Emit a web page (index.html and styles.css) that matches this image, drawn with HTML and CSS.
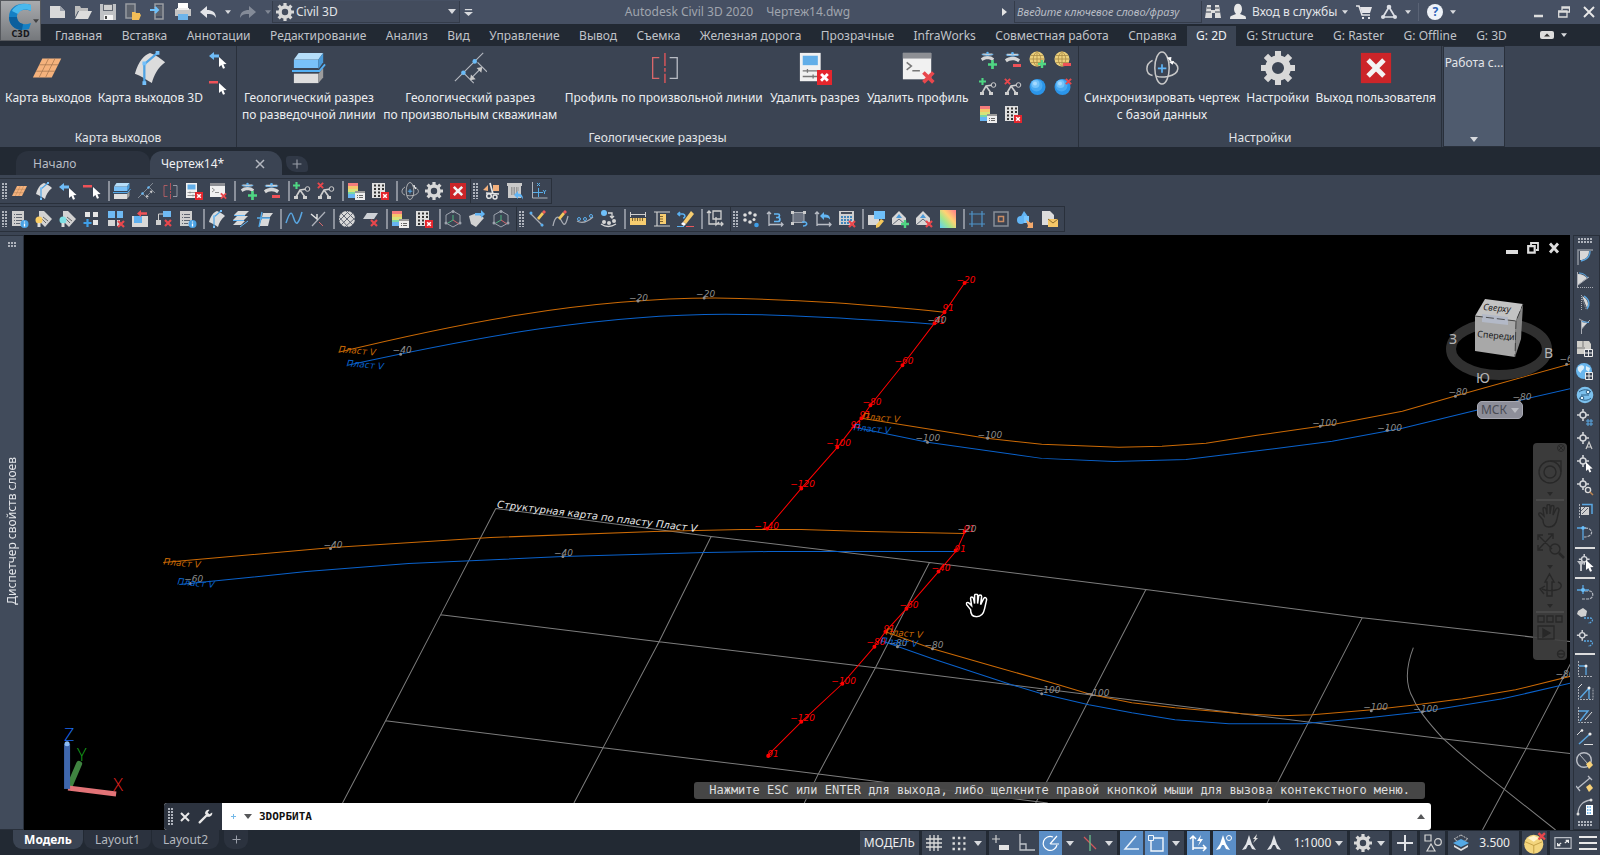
FILE: index.html
```html
<!DOCTYPE html>
<html lang="ru">
<head>
<meta charset="utf-8">
<title>Autodesk Civil 3D 2020 — Чертеж14.dwg</title>
<link rel="stylesheet" href="styles.css">
</head>
<body>
<svg class="defs" aria-hidden="true">
  <!-- badges -->
  <symbol id="bx" viewBox="0 0 8 8"><path fill="#e5262d" d="M0 0h8v8H0z"/><path stroke="#fff" stroke-width="1.5" d="M2.2 2.2l3.6 3.6M5.8 2.2L2.2 5.8"/></symbol>
  <symbol id="rx" viewBox="0 0 8 8"><path stroke="#e8474c" stroke-width="2.2" d="M1 1l6 6M7 1L1 7"/></symbol>
  <symbol id="gp" viewBox="0 0 8 8"><path stroke="#4fd683" stroke-width="2.4" d="M4 0v8M0 4h8"/></symbol>
  <symbol id="cur" viewBox="0 0 8 12"><path fill="#fff" d="M0 0v10l2.4-2 1.6 3.8 2-.9-1.6-3.6L7.600 7z"/></symbol>
  <symbol id="dn" viewBox="0 0 8 5"><path fill="#d8dade" d="M0 0h8L4 5z"/></symbol>
  <!-- application bar -->
  <symbol id="new" viewBox="0 0 18 18"><path fill="#d9d9d9" d="M1 3h10l5 5v7H1z"/><path fill="#9aa0aa" d="M11 3v5h5z"/></symbol>
  <symbol id="open" viewBox="0 0 18 18"><path fill="#bdbdbd" d="M1 3h5l1 2h7v3H4L1 14z"/><path fill="#dcdcdc" d="M5 8h13l-4 8H1z"/></symbol>
  <symbol id="save" viewBox="0 0 18 18"><path fill="#bfc1c4" d="M1 1h16v16H1z"/><path fill="#5f6570" d="M4 1h10v7H4z"/><path fill="#cfcfcf" d="M5 2h8v5H5z"/><path fill="#f4f4f4" d="M5 12h9v5H5z"/><path fill="#444" d="M6 13h2v3H6z"/></symbol>
  <symbol id="webopen" viewBox="0 0 18 18"><path fill="none" stroke="#9a9da3" stroke-width="1.500" d="M2 1h9v14H2z"/><path fill="#5d636d" d="M3 2h7v12H3z"/><path fill="#f2bd57" d="M8 9h3l1 1h4v1l1 1-2 5H8z"/></symbol>
  <symbol id="websave" viewBox="0 0 18 18"><path fill="none" stroke="#9a9da3" stroke-width="1.500" d="M6 1h8v15H6z"/><path fill="#5d636d" d="M7 3h6v10H7z"/><path stroke="#6fc1fb" stroke-width="2" fill="none" d="M1 7h8M6 4l3 3-3 3"/></symbol>
  <symbol id="print" viewBox="0 0 18 18"><path fill="#fff" d="M4 0h10v6H4z"/><path fill="#c4c4c4" d="M1 6h16v7H1z"/><path fill="#6db4ea" d="M4 11h10v6H4z"/><path fill="#eee" d="M3 5h12v2H3z"/></symbol>
  <symbol id="undo" viewBox="0 0 18 18"><path fill="currentColor" d="M1 9l7-6v4c5 0 9 2 9 8-2-4-5-4-9-4v4z"/></symbol>
  <symbol id="gear" viewBox="0 0 18 18"><circle cx="9" cy="9" r="5" fill="none" stroke="#d8d8d8" stroke-width="3.600"/><path stroke="#d8d8d8" stroke-width="3.200" d="M9 0v3M9 15v3M0 9h3M15 9h3M2.600 2.600l2.200 2.200M13.200 13.200l2.200 2.200M2.600 15.400l2.200-2.200M13.200 4.800l2.200-2.200"/></symbol>
  <symbol id="bino" viewBox="0 0 18 18"><path fill="#ddd" d="M3 2h4v5h4V2h4l2 13h-6V10H8v5H1z"/><path stroke="#39404d" d="M3 5h4M11 5h4M2 9h5M11 9h5"/></symbol>
  <symbol id="user" viewBox="0 0 18 18"><path fill="#e8e8e8" d="M5 6c0-7 8-7 8 0 0 2-1 4-2 5l5 2c1 0 1 3 1 3H1s0-3 1-3l5-2c-1-1-2-3-2-5z"/></symbol>
  <symbol id="cart" viewBox="0 0 18 18"><path fill="none" stroke="#e4e4e8" stroke-width="1.600" d="M1 3h3l3 9h8"/><path fill="#e4e4e8" d="M5 4h12l-2 6H7z"/><path fill="#e4e4e8" d="M7 14h2v2H7zM13 14h2v2h-2z"/></symbol>
  <symbol id="tri" viewBox="0 0 18 18"><path fill="none" stroke="#dcdfe6" stroke-width="1.700" d="M9 4L3 14h12z"/><circle cx="9" cy="4" r="2.300" fill="#dcdfe6"/><circle cx="3" cy="14" r="2" fill="#dcdfe6"/><circle cx="15" cy="14" r="2" fill="#dcdfe6"/></symbol>
  <!-- geology commands -->
  <symbol id="sheet" viewBox="0 0 18 18"><path fill="#f5b27c" d="M6 4h10l-5 10H1z"/><path stroke="#a87850" stroke-width=".4" d="M9.300 4l-5 10M12.700 4l-5 10M4.300 7.300h10M2.700 10.700h10"/></symbol>
  <symbol id="surf" viewBox="0 0 18 18"><path fill="#dcdcdc" d="M1 12C3 5 6 2 9 1c3 1 6 3 8 5-4 3-6 7-7 11-3-2-6-4-9-5z"/><path fill="none" stroke="#4fa3e3" stroke-width="1.200" d="M6 17V7l7-6"/><path fill="#74c0fa" d="M5 5.500h2v2H5zM5 16h2v2H5zM12 0h2v2h-2z"/></symbol>
  <symbol id="selarr" viewBox="0 0 18 18"><path fill="#6fbcf7" d="M0 5l5-4v2.500h5v3H5V9z"/><use href="#cur" x="10" y="6" width="8" height="12"/></symbol>
  <symbol id="selmin" viewBox="0 0 18 18"><path fill="#ef5258" d="M0 3h9v2.500H0z"/><use href="#cur" x="10" y="5" width="8" height="12"/></symbol>
  <symbol id="cube" viewBox="0 0 18 18"><path fill="#79c1f8" d="M1 4.500h13V9H1z"/><path fill="#b6def9" d="M3.500 1h13L14 4.500H1z"/><path fill="#4b9bd8" d="M14 4.500L16.500 1v5L14 9.500z"/><path fill="#dedede" d="M1 12h13v5H1z"/><path fill="#9c9c9c" d="M14 12l2.500-3v5L14 17z"/><path fill="none" stroke="#55b1f5" d="M0 10.600h14.500l3-3.500"/></symbol>
  <symbol id="bore" viewBox="0 0 18 18"><path stroke="#b4b8bf" stroke-width=".6" d="M1 16L16 1M6 12l5 5M13 6l5 5M9 15l6-6"/><path fill="#c9c9c9" d="M9 15.500l.5-3 2.500 2.500zM15.500 8.500l-3 .5L15 11.500z"/><circle cx="5.500" cy="11.500" r="1.200" fill="#6cbcf7"/><circle cx="11.500" cy="5.500" r="1.200" fill="#6cbcf7"/></symbol>
  <symbol id="prof" viewBox="0 0 18 18"><path fill="none" stroke="#d9676a" stroke-width=".7" d="M6.500 3.500H3v11h3.500"/><path fill="none" stroke="#b8bcc4" stroke-width=".7" d="M12 3.500h4v11h-4"/><path stroke="#e8575b" stroke-width=".7" stroke-dasharray="7 1 2 1" d="M9.500 1v16"/></symbol>
  <symbol id="delsec" viewBox="0 0 18 18"><path fill="#f1f1f1" d="M1 1h11v15H1z"/><path fill="#62aee8" d="M2.500 2.500h8v5h-8z"/><path stroke="#777" stroke-width=".7" d="M2.500 10.500h8M2.500 13.500h8M5 9.500v2M8 12.500v2"/><use href="#bx" x="10" y="10" width="8" height="8"/></symbol>
  <symbol id="delprof" viewBox="0 0 18 18"><path fill="#f1f1f1" d="M1 1h15v14H1z"/><path fill="#8d8f94" d="M1 1h15v3H1z"/><path fill="none" stroke="#777" stroke-width=".8" d="M3 6l2.500 2L3 10M6 10.500h4"/><use href="#rx" x="11" y="10" width="7" height="8"/></symbol>
  <symbol id="lay" viewBox="0 0 18 18"><path fill="#d6d6d6" d="M1 9c4-4 12-4 16 0l-2 3c-3-3-9-3-12 0zM3 3h12v2H3z"/><path fill="none" stroke="#60b5f4" d="M2 4q7 3 14 0"/><circle cx="9" cy="2.500" r="1.500" fill="#60b5f4"/></symbol>
  <symbol id="layp" viewBox="0 0 18 18"><use href="#lay" width="17" height="15"/><use href="#gp" x="9" y="9" width="9" height="9"/></symbol>
  <symbol id="laym" viewBox="0 0 18 18"><use href="#lay" width="17" height="17"/><path fill="#ef5258" d="M9 13h8v3H9z"/></symbol>
  <symbol id="glob" viewBox="0 0 18 18"><circle cx="8" cy="8" r="7.500" fill="#ecd07c"/><path fill="none" stroke="#a98b46" stroke-width=".8" d="M1 8h14M8 .5v15M2 4.500h12M2 11.500h12M8 .5c-5 4-5 11 0 15M8 .5c5 4 5 11 0 15"/></symbol>
  <symbol id="globp" viewBox="0 0 18 18"><use href="#glob" width="18" height="18"/><use href="#gp" x="9" y="9" width="8" height="8"/></symbol>
  <symbol id="globm" viewBox="0 0 18 18"><use href="#glob" width="18" height="18"/><path fill="#ef5258" d="M9 12h8v3H9z"/></symbol>
  <symbol id="node" viewBox="0 0 18 18"><path fill="none" stroke="#cfcfcf" stroke-width="1.600" d="M3 15l4-7 7-1M7 8l5 7"/><circle cx="14.500" cy="7" r="2.300" fill="#3b4453" stroke="#cfcfcf"/><path fill="#cfcfcf" d="M1 14h4v3H1zM10 14h4v3h-4z"/></symbol>
  <symbol id="nodep" viewBox="0 0 18 18"><use href="#node" width="18" height="18"/><use href="#gp" width="7" height="7"/></symbol>
  <symbol id="nodex" viewBox="0 0 18 18"><use href="#node" width="18" height="18"/><use href="#rx" width="7" height="7"/></symbol>
  <symbol id="ball" viewBox="0 0 18 18"><circle cx="8.500" cy="9" r="8" fill="#2b95e9"/><circle cx="7.500" cy="7.500" r="6" fill="#4aaaf2"/><circle cx="6.500" cy="6" r="4" fill="#74c3fa"/><circle cx="6" cy="5.500" r="2" fill="#a6daff"/></symbol>
  <symbol id="ballx" viewBox="0 0 18 18"><use href="#ball" width="18" height="18"/><use href="#rx" x="11" y="0" width="7" height="7"/></symbol>
  <symbol id="grad" viewBox="0 0 18 18"><path fill="#f47c7c" d="M1 1h10v4H1z"/><path fill="#f6c56b" d="M1 4h10v3H1z"/><path fill="#d8e37a" d="M1 7h10v3H1z"/><path fill="#79d7a7" d="M1 10h10v3H1z"/><path fill="#67b5f4" d="M1 12h10v4H1z"/><path fill="#eee" d="M8 9h10v9H8z"/><path fill="#999" d="M8 9h10v2H8z"/><path stroke="#666" d="M10 13.500h1M12 13.500h4M10 15.500h1M12 15.500h4"/></symbol>
  <symbol id="dots" viewBox="0 0 18 18"><path fill="#e0e0e0" d="M1 1h13v15H1z"/><path stroke="#333" stroke-width="1.800" stroke-dasharray="2 2" d="M3 3.500h10M3 7h10M3 10.500h7M3 14h7"/><use href="#bx" x="10" y="10" width="8" height="8"/></symbol>
  <symbol id="orbit" viewBox="0 0 18 18"><ellipse cx="9" cy="9" rx="3.800" ry="8.500" fill="none" stroke="#c8c8c8" stroke-width=".8"/><path fill="none" stroke="#c8c8c8" stroke-width=".8" d="M4 13c-4-1-4-6 0-8M13 5c6 2 6 7-1 8.500-3 .5-5 .2-6-.2"/><path stroke="#5fb4f5" stroke-width=".9" d="M9 7v4.500M6.800 9.200h4.500"/><path fill="#fff" d="M11.500 3.500l2.500-.3-.3 2.400zM12.800 5.800l2.600-.5-.8 2z"/></symbol>
  <symbol id="exit" viewBox="0 0 18 18"><path fill="#cc2529" d="M1 1h16v16H1z"/><path stroke="#f3f3f3" stroke-width="2.600" d="M4.800 4.800l8.400 8.400M13.200 4.800l-8.400 8.400"/></symbol>
  <!-- toolbars -->
  <symbol id="cut" viewBox="0 0 18 18"><path fill="#f3b07c" d="M1 8l5-5v6zM11 3h6v6h-6z"/><path stroke="#e6e6e6" stroke-width="1.700" d="M8 1l3 11M4 11l13 1"/><circle cx="7" cy="14" r="2.300" fill="none" stroke="#e6e6e6" stroke-width="1.500"/><circle cx="13" cy="15" r="2" fill="none" stroke="#e6e6e6" stroke-width="1.500"/></symbol>
  <symbol id="tblback" viewBox="0 0 18 18"><path fill="#c9c9c9" d="M1 1h15v3h-1v12H2V4H1z"/><path stroke="#666" stroke-dasharray="1.500 1" d="M5 6h8M5 8h8M5 10h7M5 12h5"/><path fill="#62b5f5" d="M8 13l4-4v2.500c4 0 5 3 5 6-1-2-2-3-5-3V17z"/></symbol>
  <symbol id="xy" viewBox="0 0 18 18"><path fill="none" stroke="#aeb3bb" d="M2.500 0v16h15"/><path fill="none" stroke="#59aee8" d="M8.500 6v9M3 10.500h10M7 1l3 3M10 1L7 4M13 8l1.500 2L16 8M14.500 10v2"/></symbol>
  <symbol id="list" viewBox="0 0 18 18"><path fill="#cfcfcf" d="M1 1h12v15H1z"/><path stroke="#5d6470" d="M3 4.500h1M5 4.500h6M3 7.500h1M5 7.500h6M3 10.500h1M5 10.500h6M3 13.500h1M5 13.500h4"/><circle cx="13.500" cy="14" r="4" fill="#4ba3e6"/><path stroke="#fff" stroke-width="1.300" d="M13.500 13.500v3M13.500 11.500v1"/></symbol>
  <symbol id="tagy" viewBox="0 0 18 18"><path fill="#d2d2d2" d="M4 1h5l8 8-7 8-5-5-1-6z"/><path stroke="#666" d="M8 7l5 4M7 9l4 4"/><circle cx="4" cy="10" r="3.500" fill="#f9cc62"/><path fill="#ddd" d="M2.500 13h3v4h-3z"/></symbol>
  <symbol id="tagc" viewBox="0 0 18 18"><path fill="#d2d2d2" d="M4 1h5l8 8-7 8-5-5-1-6z"/><path stroke="#666" d="M8 7l5 4M7 9l4 4"/><circle cx="4" cy="10" r="3.500" fill="#7fe0e4"/><path fill="#ddd" d="M2.500 13h3v4h-3z"/></symbol>
  <symbol id="sqp" viewBox="0 0 18 18"><path fill="#e6e6e6" d="M2 2h5v5H2zM10 2h5v5h-5zM10 10h5v5h-5z"/><path stroke="#3f9fe8" stroke-width="2.200" d="M4.500 9v8M.5 13h8"/></symbol>
  <symbol id="sqx" viewBox="0 0 18 18"><path fill="#6fbaf3" d="M1 1h7v7H1zM10 1h6v7h-6z"/><path fill="#d5d5d5" d="M1 10h7v6H1zM10 10h3v6h-3z"/><use href="#rx" x="10" y="10" width="8" height="8"/></symbol>
  <symbol id="boxarr" viewBox="0 0 18 18"><path fill="#d9d9d9" d="M1 6h16v11H1z"/><path fill="#5fb1f0" d="M3 6h8v7H3z"/><path fill="#ef5258" d="M6 3.500L10 0v2.200h6v2.600h-6V7z"/></symbol>
  <symbol id="linkx" viewBox="0 0 18 18"><path fill="#6fbaf3" d="M8 1h8v6H8z"/><path fill="#cfcfcf" d="M1 10h5v5H1z"/><path fill="none" stroke="#cfcfcf" d="M3.500 10V4H8"/><use href="#rx" x="9" y="9" width="8" height="8"/></symbol>
  <symbol id="layers" viewBox="0 0 18 18"><path fill="#d9d9d9" d="M6 1h11l-4 4H2zM5 6h11l-4 4H1zM5 11h8l-4 4H1z"/><path fill="none" stroke="#62b5f5" d="M2 5.500h11M1 10.500h11M8 17l8-6"/></symbol>
  <symbol id="plane" viewBox="0 0 18 18"><path fill="#d9d9d9" d="M7 3h10l-3 4H6zM6 8h8l-2 8H3z"/><path stroke="#56aceb" stroke-width="1.300" d="M3 17L6 2M1 8h13"/></symbol>
  <symbol id="spline" viewBox="0 0 18 18"><path fill="none" stroke="#5aa7e2" stroke-width="1.500" d="M1 13C6-2 7 3 9 9s4 7 8-7"/></symbol>
  <symbol id="trimv" viewBox="0 0 18 18"><path stroke="#aeb3bb" stroke-width="1.200" d="M3 16L16 2"/><path fill="none" stroke="#e5e5e5" stroke-width="1.400" d="M2 4l6 5V4"/><path stroke="#d26a6e" d="M10 12l4 4"/></symbol>
  <symbol id="mesh" viewBox="0 0 18 18"><circle cx="9" cy="9" r="8" fill="#d9d9d9"/><path stroke="#636975" d="M3 3l12 12M1 7l9 10M8 1l9 9M3 15L15 3M1 11L11 1M7 17L17 8"/></symbol>
  <symbol id="shx" viewBox="0 0 18 18"><path fill="#cdd0d5" d="M5 3h11l-4 6H1z"/><use href="#rx" x="8" y="9" width="8" height="8"/></symbol>
  <symbol id="hex" viewBox="0 0 18 18"><path fill="none" stroke="#9da3ad" d="M9 1l7 4v8l-7 4-7-4V5z"/><path stroke="#4fb682" d="M9 10V5M9 10l-5 3"/><path stroke="#d4666a" d="M9 10l6 4"/><g fill="#9da3ad"><circle cx="9" cy="1.500" r="1.500"/><circle cx="2" cy="13" r="1.500"/><circle cx="16" cy="13" r="1.500"/></g></symbol>
  <symbol id="tagarr" viewBox="0 0 18 18"><path fill="#d2d2d2" d="M1 6l8-3 7 5-8 9-5-3z"/><path fill="#62b5f5" d="M7 3h6V0l4 4-4 4V5.500H7z"/></symbol>
  <symbol id="pena" viewBox="0 0 18 18"><path stroke="#a9adb5" stroke-width="1.200" d="M2 3l13 13"/><path fill="#f5c85c" d="M9 8l5-6 2 2-5 6z"/><path fill="#ee5a5a" d="M14 2l2-2 2 2-2 2z"/><circle cx="3" cy="3" r="1.500" fill="#5bb0f0"/><circle cx="14" cy="15" r="1.500" fill="#5bb0f0"/></symbol>
  <symbol id="penb" viewBox="0 0 18 18"><path fill="none" stroke="#a9adb5" stroke-width="1.300" d="M1 16C3 5 7 6 9 10s4 9 7-4"/><path fill="#f5c85c" d="M6 8l5-6 2 2-5 6z"/><path fill="#ee5a5a" d="M11 2l2-2 2 2-2 2z"/></symbol>
  <symbol id="chain" viewBox="0 0 18 18"><path fill="none" stroke="#a9adb5" stroke-width="1.200" d="M1 11q7 4 16-4"/><g fill="none" stroke="#5bb0f0"><circle cx="3" cy="9" r="1.500"/><circle cx="9" cy="9" r="1.500"/><circle cx="15" cy="6" r="1.500"/></g></symbol>
  <symbol id="chainb" viewBox="0 0 18 18"><path fill="none" stroke="#d6d6d6" stroke-width="1.300" d="M1 14q7 5 15 0M8 3h4v5M10 6l2 2 2-2"/><circle cx="4" cy="3" r="3" fill="#6fc0fa"/><g fill="#d6d6d6"><circle cx="4" cy="12" r="2"/><circle cx="9" cy="13" r="2"/><circle cx="14" cy="11" r="2"/></g></symbol>
  <symbol id="ruler" viewBox="0 0 18 18"><path fill="#f7cd70" d="M1 8h16v7H1z"/><path stroke="#7d6330" d="M3.500 8v3M6 8v3M8.500 8v3M11 8v3M13.500 8v3"/><path stroke="#cfcfcf" d="M1.500 2v5M16.500 2v5M2 4.500h14"/></symbol>
  <symbol id="rulv" viewBox="0 0 18 18"><path fill="#f7cd70" d="M7 4h6v10H7z"/><path stroke="#7d6330" d="M7 6.500h3M7 9h3M7 11.500h3"/><path stroke="#cfcfcf" stroke-width="1.200" d="M1 2h16M1 16h16M4 2v14"/></symbol>
  <symbol id="erase" viewBox="0 0 18 18"><path fill="#f7cd70" d="M6 12L14 1l3 3-8 10z"/><path fill="#fff" d="M6 12l3 2-2 2-3-2z"/><path fill="none" stroke="#5bb0f0" stroke-width="1.600" d="M3 2l-2 2 2 2M1 4h5c3 1 2 4 0 4"/><path stroke="#e8575b" d="M9 16.500h8"/><path stroke="#5bb0f0" d="M0 16.500h7"/></symbol>
  <symbol id="move" viewBox="0 0 18 18"><path fill="none" stroke="#cfcfcf" stroke-width="1.300" d="M3 1v13h14M1 3l2-2 2 2M15 12l2 2-2 2M7 1h8v8H7zM10 7v8l3-3"/></symbol>
  <symbol id="ring" viewBox="0 0 18 18"><g fill="#dedede"><circle cx="8" cy="3" r="1.800"/><circle cx="3" cy="5" r="1.800"/><circle cx="13" cy="5" r="1.800"/><circle cx="3" cy="10" r="1.800"/><circle cx="8" cy="12" r="1.800"/><circle cx="12" cy="9.500" r="1.500"/></g><circle cx="14.500" cy="15" r="2.300" fill="#3f9fe8"/></symbol>
  <symbol id="axa" viewBox="0 0 18 18"><path fill="none" stroke="#b9bdc5" stroke-width="1.300" d="M3 16V2M1 4l2-2 2 2M3 14.500h14M15 12.500l2 2-2 2"/></symbol>
  <symbol id="ax3" viewBox="0 0 18 18"><use href="#axa" width="18" height="18"/><path fill="none" stroke="#63b6f4" stroke-width="1.700" d="M8 4h4c2 0 2 3 0 3.500h-2 2c2.500 0 2.500 4 0 4H8"/></symbol>
  <symbol id="axb" viewBox="0 0 18 18"><use href="#axa" width="18" height="18"/><path fill="#63b6f4" d="M6 6l4-4v2.500c4 0 6 1 6 5-2-2-3-2-6-2V10z"/></symbol>
  <symbol id="selsq" viewBox="0 0 18 18"><path fill="#6b7280" stroke="#a9adb5" d="M3 2.500h11v10H3z"/><path fill="#ccc" d="M1 1h3v3H1zM13 1h3v3h-3zM1 12h3v3H1z"/><path fill="none" stroke="#5bb0f0" stroke-width="1.500" d="M12 12h3c3 1 2 4-2 4"/></symbol>
  <symbol id="calcx" viewBox="0 0 18 18"><path fill="#cfcfcf" d="M1 1h15v14H1z"/><path fill="#454d5a" d="M3 2h11v2H3z"/><path stroke="#3f86bd" stroke-width="2" stroke-dasharray="2 1" d="M3 7h11M3 10h11M3 13h8"/><use href="#rx" x="10" y="10" width="8" height="8"/></symbol>
  <symbol id="boxpen" viewBox="0 0 18 18"><path fill="#d6d6d6" d="M1 5h11v10H1z"/><path fill="#6fc0fa" d="M7 1h11v8H7z"/><path fill="#f5c85c" d="M9 15l5-6 3 2-5 6-3 1z"/></symbol>
  <symbol id="env" viewBox="0 0 18 18"><path fill="#d6d6d6" d="M1 8l7-7 7 7v7H1z"/><path fill="none" stroke="#626975" d="M1 15l7-6 7 6"/><path fill="#4a9ad8" d="M5 8l3-4 3 4z"/></symbol>
  <symbol id="envp" viewBox="0 0 18 18"><use href="#env" width="18" height="18"/><use href="#gp" x="10" y="10" width="8" height="8"/></symbol>
  <symbol id="envx" viewBox="0 0 18 18"><use href="#env" width="18" height="18"/><use href="#rx" x="10" y="10" width="8" height="8"/></symbol>
  <linearGradient id="rg" x1="0" y1="1" x2="1" y2="0"><stop offset="0" stop-color="#5cd0f7"/><stop offset=".35" stop-color="#a6e58a"/><stop offset=".6" stop-color="#ffd274"/><stop offset="1" stop-color="#ff7a8a"/></linearGradient>
  <symbol id="rain" viewBox="0 0 18 18"><path fill="url(#rg)" d="M1 0h16v18H1z"/></symbol>
  <symbol id="frame" viewBox="0 0 18 18"><path stroke="#4f93c9" stroke-width="1.200" d="M4 1v16M14 1v16M1 4h16M1 14h16"/></symbol>
  <symbol id="sqsq" viewBox="0 0 18 18"><path fill="none" stroke="#878d98" stroke-width="1.500" d="M2 2h14v14H2z"/><path fill="none" stroke="#c98b63" stroke-width="1.500" d="M6.500 6.500h5v5h-5z"/></symbol>
  <symbol id="shapes" viewBox="0 0 18 18"><path fill="#62b5f5" d="M8 1l5 7H4z"/><circle cx="5" cy="10" r="4" fill="#62b5f5"/><path fill="#79c7ff" d="M8 6h5v7H8z"/><path fill="#f3a96c" d="M10 10l5 3 2-1v6h-6l1-2z"/></symbol>
  <symbol id="docmail" viewBox="0 0 18 18"><path fill="#dcdcdc" d="M2 1h8l4 4v10H2z"/><path fill="#f6c868" d="M8 9h10v8H8z"/><path fill="none" stroke="#8c6c2c" d="M8 9l5 4 5-4"/></symbol>
  <!-- vertical toolbar -->
  <symbol id="v1" viewBox="0 0 18 18"><path fill="#d8d8d8" d="M4 3h9c0 5-3 9-9 9z"/><path fill="none" stroke="#5aa7e2" stroke-width="1.300" d="M14 3c0 6-4 9-9 10"/><path fill="none" stroke="#8e949f" stroke-width="1.500" d="M2 17V2h15"/></symbol>
  <symbol id="v2" viewBox="0 0 18 18"><path fill="#d8d8d8" d="M2 3c4 0 7 2 9 4L2 14z"/><path fill="none" stroke="#5aa7e2" d="M3 2c4 0 7 2 9 5"/><path stroke="#a9adb5" d="M1.500 1v16M2 14l11-8"/><path stroke="#a9adb5" stroke-dasharray="1 1" d="M2 16.500h15"/></symbol>
  <symbol id="v3" viewBox="0 0 18 18"><path fill="#d8d8d8" d="M6 2c6 3 7 8 5 12z"/><path fill="none" stroke="#5aa7e2" stroke-width="1.400" d="M8 2c6 4 6 9 3 13"/><path stroke="#a9adb5" stroke-dasharray="1 1" d="M5.500 1v16M5.500 3l5 13"/></symbol>
  <symbol id="v4" viewBox="0 0 18 18"><path fill="#d8d8d8" d="M6 5l5 1-5 6z"/><path stroke="#a9adb5" d="M5.500 4v13M3 2l8 4M6 11l8-8"/><path stroke="#5aa7e2" d="M6 4.500l7 1"/></symbol>
  <symbol id="v5" viewBox="0 0 18 18"><path fill="#d0cfca" d="M1 1h12l2 3v10H1z"/><path stroke="#777" d="M1 8h8M7 1v6"/><path fill="#3b4453" stroke="#eee" d="M8.500 9.500h8v7h-8zM12.500 9.500v7M8.500 13h8"/></symbol>
  <symbol id="v6" viewBox="0 0 18 18"><circle cx="8" cy="8" r="8" fill="#69b6ed"/><path fill="#d9eefa" d="M2 4c3-3 7-2 6 1s-3 2-3 5c-2-1-4-3-3-6zM10 3l4 2-1 4-3-2z"/><path fill="#3b4453" stroke="#eee" d="M9.500 9.500h7v7h-7zM13 9.500v7M9.500 13h7"/></symbol>
  <symbol id="v7" viewBox="0 0 18 18"><circle cx="9" cy="9" r="8.300" fill="#7cc1ee"/><path fill="none" stroke="#2e5f85" d="M3 6c4-3 9-3 12 0M3 12c4 3 9 3 12 0M5 9h8"/><g fill="#e9f5fc" stroke="#2e5f85"><circle cx="6" cy="12" r="1.800"/><circle cx="12" cy="6" r="1.800"/></g></symbol>
  <symbol id="star" viewBox="0 0 18 18"><path stroke="#d3d5d9" stroke-width="1.600" d="M7 0v12M1 6h12"/><circle cx="7" cy="6" r="3" fill="#3b4453" stroke="#d3d5d9" stroke-width="1.500"/></symbol>
  <symbol id="v8" viewBox="0 0 18 18"><use href="#star" width="18" height="18"/><path stroke="#5aa7e2" d="M12 10v7M15 10v7M10 12h7M10 15h7"/></symbol>
  <symbol id="v9" viewBox="0 0 18 18"><use href="#star" width="18" height="18"/><path fill="none" stroke="#ccc" stroke-width="1.200" d="M10 17l3-7 3 7M11 15h4"/></symbol>
  <symbol id="v10" viewBox="0 0 18 18"><use href="#star" width="18" height="18"/><use href="#cur" x="10" y="7" width="7" height="11"/></symbol>
  <symbol id="v11" viewBox="0 0 18 18"><use href="#star" width="18" height="18"/><circle cx="12" cy="12" r="2.600" fill="none" stroke="#ddd" stroke-width="1.400"/><path stroke="#bc8450" stroke-width="1.500" d="M14 14l3 3"/></symbol>
  <symbol id="v12" viewBox="0 0 18 18"><path stroke="#a9adb5" stroke-dasharray="2 1" d="M3.500 3v14"/><path fill="#d0d0d0" d="M5 6h8v8H5z"/><path stroke="#5b626e" d="M6 13l6-6M5 10l4-4"/><path fill="none" stroke="#5aa7e2" stroke-width="1.500" d="M6 3.500h10V13"/></symbol>
  <symbol id="v13" viewBox="0 0 18 18"><path stroke="#5aa7e2" stroke-width="1.300" d="M1 4h9M7 2v14"/><path fill="none" stroke="#b6bac2" stroke-width="1.200" stroke-dasharray="3 1" d="M9 4c9 0 9 9-1 9"/><circle cx="7" cy="4" r="1.800" fill="#6cc0fa"/></symbol>
  <symbol id="v14" viewBox="0 0 18 18"><use href="#star" x="2" width="16" height="16"/><path fill="#bfc2c8" d="M1 7h8L6 11v6H4v-6z"/><use href="#cur" x="10" y="6" width="8" height="12"/></symbol>
  <symbol id="v15" viewBox="0 0 18 18"><path fill="none" stroke="#b6bac2" stroke-width="1.200" stroke-dasharray="3 1" d="M9 7h5c4 1 4 8-2 8H6"/><path stroke="#5aa7e2" stroke-width="1.300" d="M1 6h12M7 1v9"/><circle cx="7" cy="6" r="2" fill="#6cc0fa"/></symbol>
  <symbol id="v16" viewBox="0 0 18 18"><path fill="#d0d0d0" d="M2 4l5-3 4 3-1 5-5 1-4-3z"/><path fill="none" stroke="#5aa7e2" stroke-width="1.300" stroke-dasharray="2 1" d="M8 11h6c4 0 3 5-2 5"/></symbol>
  <symbol id="v17" viewBox="0 0 18 18"><use href="#star" width="16" height="16"/><path fill="none" stroke="#5aa7e2" stroke-width="1.300" stroke-dasharray="2 1" d="M8 11h6c4 0 3 5-2 5"/></symbol>
  <symbol id="v18" viewBox="0 0 18 18"><path fill="none" stroke="#a9adb5" stroke-dasharray="2 1" d="M2.500 1v15.500H17"/><path fill="none" stroke="#5aa7e2" stroke-width="1.300" d="M3 6h7v9"/><circle cx="10" cy="6" r="1.500" fill="#eee"/></symbol>
  <symbol id="v19" viewBox="0 0 18 18"><path fill="none" stroke="#a9adb5" stroke-dasharray="2 1" d="M2.500 6v10.500H17V5"/><path fill="none" stroke="#5aa7e2" stroke-width="1.400" d="M4 15L13 5v11"/><path stroke="#ddd" d="M2 5l4-4"/><circle cx="13" cy="5" r="1.500" fill="#eee"/></symbol>
  <symbol id="v20" viewBox="0 0 18 18"><path fill="none" stroke="#a9adb5" stroke-dasharray="2 1" d="M2.500 1v15.500H17"/><path fill="none" stroke="#5aa7e2" stroke-width="1.400" d="M3 5h9L4 15"/><path stroke="#ddd" d="M9 14l7-8"/></symbol>
  <symbol id="v21" viewBox="0 0 18 18"><path stroke="#5aa7e2" stroke-width="1.400" d="M3 15L14 5"/><path stroke="#ddd" d="M1 6l5-5M8 15.500h9"/><circle cx="14" cy="5" r="1.600" fill="#eee"/><circle cx="6" cy="1.500" r="1.300" fill="#eee"/></symbol>
  <symbol id="v22" viewBox="0 0 18 18"><circle cx="8" cy="8" r="7.300" fill="none" stroke="#b9bdc5" stroke-width="1.400"/><path stroke="#b9bdc5" d="M4 3l8 9"/><path fill="#f8d27a" d="M10 12l4-3 3 4-4 4z"/></symbol>
  <symbol id="v23" viewBox="0 0 18 18"><path stroke="#b9bdc5" stroke-width="1.300" d="M2 13L14 3M0 11l4 5M12 1l4 4"/><path fill="#f8d27a" d="M10 12l4-3 3 4-4 4z"/></symbol>
  <symbol id="v24" viewBox="0 0 18 18"><path fill="none" stroke="#b9bdc5" stroke-width="1.300" d="M2 16C2 8 7 3 15 2"/><circle cx="2" cy="16" r="1.500" fill="#ddd"/><circle cx="15" cy="2" r="1.500" fill="#ddd"/><path fill="#fff" d="M10 7h7v10h-7z"/><path stroke="#4fa3e3" stroke-width="1.500" stroke-dasharray="1.500 1" d="M11 9h5M11 12h5M11 15h5"/></symbol>
  <!-- status bar -->
  <symbol id="s1" viewBox="0 0 18 18"><path stroke="#dcdcdc" stroke-width="1.300" d="M5 1v16M9 1v16M13 1v16M1 5h16M1 9h16M1 13h16"/></symbol>
  <symbol id="s2" viewBox="0 0 18 18"><path stroke="#dcdcdc" stroke-width="2.400" stroke-dasharray="2.400 3" d="M2.500 4h13M2.500 9.500h13M2.500 15h13"/></symbol>
  <symbol id="s3" viewBox="0 0 18 18"><path stroke="#cfcfcf" stroke-width="1.200" d="M4 1v8M0 5h8"/><path fill="#e3e3e3" d="M7 11h10v5H7z"/></symbol>
  <symbol id="s4" viewBox="0 0 18 18"><path fill="none" stroke="#c0c4ca" stroke-width="1.300" d="M3 0v16h15M3 10h6v6"/></symbol>
  <symbol id="s5" viewBox="0 0 18 18"><path fill="none" stroke="#fff" stroke-width="1.200" d="M16 11a7 7 0 1 1-4-8M9 10l7-8M9 10h9"/></symbol>
  <symbol id="s6" viewBox="0 0 18 18"><path stroke="#d3565a" stroke-width="1.300" d="M3 3l12 12"/><path stroke="#6ac08b" stroke-width="1.300" d="M9 1v16"/></symbol>
  <symbol id="s7" viewBox="0 0 18 18"><path fill="none" stroke="#e8f1fa" stroke-width="1.500" d="M14 2L3 15h14"/></symbol>
  <symbol id="s8" viewBox="0 0 18 18"><path fill="none" stroke="#f4f8fc" stroke-width="1.400" d="M4 4h12v13H4z"/><path fill="#5b8ec6" stroke="#f4f8fc" d="M1.500 1.500h5v5h-5z"/></symbol>
  <symbol id="s9" viewBox="0 0 18 18"><path fill="none" stroke="#fff" stroke-width="1.500" d="M4 16V2M1 5l3-3 3 3M4 14h13M14 11l3 3-3 3"/><path fill="#fff" d="M12 1L8 7h3l-2 5 5-7h-3z"/></symbol>
  <symbol id="ann" viewBox="0 0 18 18"><path fill="currentColor" d="M8 1l3 9 4 6-4-1-2-4H7l-2 4-4 1 4-6z"/></symbol>
  <symbol id="anna" viewBox="0 0 18 18"><use href="#ann" width="18" height="18"/><circle cx="14" cy="4" r="2.500" fill="none" stroke="#fff"/></symbol>
  <symbol id="annb" viewBox="0 0 18 18"><use href="#ann" width="18" height="18"/><path fill="#ddd" d="M16 0l-4 5h2l-2 4 5-5h-2z"/></symbol>
  <symbol id="plus" viewBox="0 0 18 18"><path stroke="currentColor" stroke-width="2" d="M9 1v16M1 9h16"/></symbol>
  <symbol id="s10" viewBox="0 0 18 18"><g fill="none" stroke="#d5d5d5" stroke-width="1.200"><path d="M1 1h6v6H1z"/><circle cx="14" cy="8" r="3.300"/><path d="M7 10l4 7H3z"/></g></symbol>
  <symbol id="s11" viewBox="0 0 18 18"><path fill="none" stroke="#c8c8c8" stroke-dasharray="2 1" d="M9 1l7 4-7 4-7-4z"/><path fill="#55a9e4" d="M9 5l8 4-8 4-8-4z"/><path fill="#e0e0e0" d="M2 11l7 4 7-4v2l-7 4-7-4z"/></symbol>
  <symbol id="s12" viewBox="0 0 18 18"><circle cx="8" cy="10" r="7.800" fill="#f3d57d"/><path fill="none" stroke="#b58e33" stroke-width=".6" d="M1 8l7 3 7-3M8 11v7"/><path fill="#fff3cd" d="M3 5l5-2 4 2-4 3z"/><use href="#rx" x="11" y="0" width="7" height="7"/></symbol>
  <symbol id="s13" viewBox="0 0 20 18"><path fill="none" stroke="#b9bdc5" stroke-width="1.300" d="M1 3h18v12H1z"/><path fill="none" stroke="#eee" stroke-width="1.300" d="M4 12l4-3M4 9v3h3M16 6l-4 3M16 9V6h-3"/></symbol>
  <symbol id="s14" viewBox="0 0 18 18"><path stroke="#e8e8e8" stroke-width="2" d="M0 3h18M0 9h18M0 15h18"/></symbol>
  <symbol id="wrench" viewBox="0 0 18 18"><path stroke="#e8e8e8" stroke-width="2.600" stroke-linecap="round" d="M3 15l8-8"/><path fill="#e8e8e8" d="M9 5c0-3 3-5 5-4l-2 3 2 2 3-2c1 3-2 5-5 5z"/></symbol>
  <symbol id="hand" viewBox="0 0 24 24"><path d="M5 16L1 11c-1-2 1-3 3-1l2 2L5 5c0-2 2-2 3 0l1 5V2c0-2 3-2 3 0v8l1-7c0-2 3-2 3 0l-1 8 3-6c1-2 3-1 3 1l-2 9c-1 5-3 8-8 8-4 0-6-2-6-7z"/></symbol>
</svg>

<div class="app">
<header class="titlebar">
  <button class="logo" aria-label="Меню приложения">
    <svg class="logo-mark" viewBox="0 0 34 28"><path fill="#1580c4" d="M27 2C15-2 5 4 5 14s9 15 20 12l2-6c-8 3-14 0-14-6S19 5 27 8z"/><path fill="#49b8ec" d="M27 2C19-1 11 2 8 8l6 3c2-4 7-6 13-3z"/><path fill="#0b5f9d" d="M5 14c0 8 6 13 13 13l1-6c-4-1-6-4-6-7z"/></svg>
    <span>C3D</span><svg class="caret logo-caret"><use href="#dn"/></svg>
  </button>
  <nav class="quick">
    <button aria-label="Создать"><svg class="i"><use href="#new"/></svg></button>
    <button aria-label="Открыть"><svg class="i"><use href="#open"/></svg></button>
    <button aria-label="Сохранить"><svg class="i"><use href="#save"/></svg></button>
    <button aria-label="Открыть из облака"><svg class="i"><use href="#webopen"/></svg></button>
    <button aria-label="Сохранить в облако"><svg class="i"><use href="#websave"/></svg></button>
    <button aria-label="Печать"><svg class="i"><use href="#print"/></svg></button>
    <button aria-label="Отменить"><svg class="i"><use href="#undo"/></svg></button>
    <svg class="caret"><use href="#dn"/></svg>
    <button class="off" aria-label="Повторить"><svg class="i flip"><use href="#undo"/></svg></button>
    <svg class="caret off"><use href="#dn"/></svg>
  </nav>
  <button class="workspace"><svg class="i"><use href="#gear"/></svg><span>Civil 3D</span><svg class="caret"><use href="#dn"/></svg></button>
  <svg class="more" viewBox="0 0 10 10"><path fill="#d8dade" d="M1 1h8v1.500H1zM0 4.500h10L5 9z"/></svg>
  <div class="doc-title"><span>Autodesk Civil 3D 2020</span><span>Чертеж14.dwg</span></div>
  <svg class="play" viewBox="0 0 5 8"><path fill="#e4e4e4" d="M0 0l5 4-5 4z"/></svg>
  <input class="search" type="text" aria-label="Поиск" placeholder="Введите ключевое слово/фразу">
  <div class="services">
    <button aria-label="Найти"><svg class="i"><use href="#bino"/></svg></button>
    <button class="login"><svg class="i"><use href="#user"/></svg>Вход в службы <svg class="caret small"><use href="#dn"/></svg></button>
    <button aria-label="Магазин"><svg class="i"><use href="#cart"/></svg></button>
    <button aria-label="Приложения"><svg class="i"><use href="#tri"/></svg></button>
    <svg class="caret small"><use href="#dn"/></svg>
    <button class="help" aria-label="Справка"><b>?</b></button>
    <svg class="caret small"><use href="#dn"/></svg>
  </div>
  <div class="winctl">
    <button aria-label="Свернуть"><svg viewBox="0 0 12 12"><path stroke="#ddd" stroke-width="2.500" d="M1 10h9"/></svg></button>
    <button aria-label="Восстановить"><svg viewBox="0 0 12 12"><path fill="none" stroke="#ddd" stroke-width="1.300" d="M4 4V1h7.500v5H9M.7 5H9v6H.7zM1 6h8M4 2h7"/></svg></button>
    <button aria-label="Закрыть"><svg viewBox="0 0 12 12"><path stroke="#e8e8e8" stroke-width="1.900" d="M1 1l10 10M11 1L1 11"/></svg></button>
  </div>
</header>

<nav class="menu">
  <div class="menu-tabs">
    <button>Главная</button><button>Вставка</button><button>Аннотации</button><button>Редактирование</button><button>Анализ</button><button>Вид</button><button>Управление</button><button>Вывод</button><button>Съемка</button><button>Железная дорога</button><button>Прозрачные</button><button>InfraWorks</button><button>Совместная работа</button><button>Справка</button><button class="active">G: 2D</button><button>G: Structure</button><button>G: Raster</button><button>G: Offline</button><button>G: 3D</button>
  </div>
  <button class="menu-min" aria-label="Свернуть ленту"><svg viewBox="0 0 14 8"><rect width="14" height="8" rx="2" fill="#ddd"/><path fill="#333" d="M4 5.500h6L7 2.500z"/></svg></button>
  <svg class="caret small"><use href="#dn"/></svg>
</nav>

<section class="ribbon">
  <div class="panel p1">
    <div class="cmds">
      <button class="cmd"><svg class="big"><use href="#sheet"/></svg>Карта выходов</button>
      <button class="cmd"><svg class="big"><use href="#surf"/></svg>Карта выходов 3D</button>
      <div class="stack">
        <button aria-label="Выбрать"><svg class="i"><use href="#selarr"/></svg></button>
        <button aria-label="Исключить"><svg class="i"><use href="#selmin"/></svg></button>
      </div>
    </div>
    <h2>Карта выходов</h2>
  </div>
  <div class="panel p2">
    <div class="cmds">
      <button class="cmd"><svg class="big"><use href="#cube"/></svg>Геологический разрез<br>по разведочной линии</button>
      <button class="cmd"><svg class="big"><use href="#bore"/></svg>Геологический разрез<br>по произвольным скважинам</button>
      <button class="cmd"><svg class="big"><use href="#prof"/></svg>Профиль по произвольной линии</button>
      <button class="cmd"><svg class="big"><use href="#delsec"/></svg>Удалить разрез</button>
      <button class="cmd"><svg class="big"><use href="#delprof"/></svg>Удалить профиль</button>
      <div class="matrix">
        <button aria-label="Добавить слой"><svg class="i"><use href="#layp"/></svg></button>
        <button aria-label="Убрать слой"><svg class="i"><use href="#laym"/></svg></button>
        <button aria-label="Добавить тело"><svg class="i"><use href="#globp"/></svg></button>
        <button aria-label="Убрать тело"><svg class="i"><use href="#globm"/></svg></button>
        <button aria-label="Добавить узел"><svg class="i"><use href="#nodep"/></svg></button>
        <button aria-label="Удалить узел"><svg class="i"><use href="#nodex"/></svg></button>
        <button aria-label="Сфера"><svg class="i"><use href="#ball"/></svg></button>
        <button aria-label="Удалить сферу"><svg class="i"><use href="#ballx"/></svg></button>
        <button aria-label="Легенда"><svg class="i"><use href="#grad"/></svg></button>
        <button aria-label="Удалить штриховку"><svg class="i"><use href="#dots"/></svg></button>
      </div>
    </div>
    <h2>Геологические разрезы</h2>
  </div>
  <div class="panel p3">
    <div class="cmds">
      <button class="cmd"><svg class="big"><use href="#orbit"/></svg>Синхронизировать чертеж<br>с базой данных</button>
      <button class="cmd"><svg class="big"><use href="#gear"/></svg>Настройки</button>
      <button class="cmd"><svg class="big"><use href="#exit"/></svg>Выход пользователя</button>
    </div>
    <h2>Настройки</h2>
  </div>
  <button class="collapsed"><span>Работа с...</span><svg class="caret"><use href="#dn"/></svg></button>
</section>

<nav class="doctabs">
  <button class="doctab">Начало</button>
  <button class="doctab active">Чертеж14*<svg viewBox="0 0 10 10"><path stroke="#b4b8c0" stroke-width="1.500" d="M1 1l8 8M9 1L1 9"/></svg></button>
  <button class="addtab" aria-label="Новая вкладка"><svg><use href="#plus"/></svg></button>
</nav>

<div class="toolbars">
  <div class="row wide">
    <div class="bar"><i class="grip"></i>
      <button aria-label="Карта выходов"><svg class="i"><use href="#sheet"/></svg></button><button aria-label="Карта 3D"><svg class="i"><use href="#surf"/></svg></button><button aria-label="Выбрать"><svg class="i"><use href="#selarr"/></svg></button><button aria-label="Исключить"><svg class="i"><use href="#selmin"/></svg></button><i class="sep"></i>
      <button aria-label="Разрез"><svg class="i"><use href="#cube"/></svg></button><button aria-label="Скважины"><svg class="i"><use href="#bore"/></svg></button><button aria-label="Профиль"><svg class="i"><use href="#prof"/></svg></button><button aria-label="Удалить разрез"><svg class="i"><use href="#delsec"/></svg></button><button aria-label="Удалить профиль"><svg class="i"><use href="#delprof"/></svg></button><i class="sep"></i>
      <button aria-label="Добавить слой"><svg class="i"><use href="#layp"/></svg></button><button aria-label="Убрать слой"><svg class="i"><use href="#laym"/></svg></button><i class="sep"></i>
      <button aria-label="Добавить узел"><svg class="i"><use href="#nodep"/></svg></button><button aria-label="Удалить узел"><svg class="i"><use href="#nodex"/></svg></button><i class="sep"></i>
      <button aria-label="Легенда"><svg class="i"><use href="#grad"/></svg></button><button aria-label="Удалить штриховку"><svg class="i"><use href="#dots"/></svg></button><i class="sep"></i>
      <button aria-label="Синхронизация"><svg class="i"><use href="#orbit"/></svg></button><button aria-label="Настройки"><svg class="i"><use href="#gear"/></svg></button><button aria-label="Выход"><svg class="i"><use href="#exit"/></svg></button>
    </div>
    <div class="bar"><i class="grip"></i>
      <button aria-label="Вырезать"><svg class="i"><use href="#cut"/></svg></button><button aria-label="Таблица"><svg class="i"><use href="#tblback"/></svg></button><button aria-label="Оси"><svg class="i"><use href="#xy"/></svg></button>
    </div>
  </div>
  <div class="row">
    <div class="bar"><i class="grip"></i>
      <button aria-label="Сведения"><svg class="i"><use href="#list"/></svg></button><button aria-label="Метка"><svg class="i"><use href="#tagy"/></svg></button><button aria-label="Метка слоя"><svg class="i"><use href="#tagc"/></svg></button><button aria-label="Добавить блок"><svg class="i"><use href="#sqp"/></svg></button><button aria-label="Удалить блок"><svg class="i"><use href="#sqx"/></svg></button><button aria-label="Импорт"><svg class="i"><use href="#boxarr"/></svg></button><button aria-label="Удалить связь"><svg class="i"><use href="#linkx"/></svg></button><button aria-label="Отчет"><svg class="i"><use href="#list"/></svg></button><i class="sep"></i>
      <button aria-label="Поверхность"><svg class="i"><use href="#surf"/></svg></button><button aria-label="Слои"><svg class="i"><use href="#layers"/></svg></button><button aria-label="Плоскость"><svg class="i"><use href="#plane"/></svg></button><i class="sep"></i>
      <button aria-label="Сплайн"><svg class="i"><use href="#spline"/></svg></button><button aria-label="Обрезка"><svg class="i"><use href="#trimv"/></svg></button><i class="sep"></i>
      <button aria-label="Сетка"><svg class="i"><use href="#mesh"/></svg></button><button aria-label="Удалить пласт"><svg class="i"><use href="#shx"/></svg></button><i class="sep"></i>
      <button aria-label="Легенда"><svg class="i"><use href="#grad"/></svg></button><button aria-label="Удалить штриховку"><svg class="i"><use href="#dots"/></svg></button><i class="sep"></i>
      <button aria-label="Изометрия"><svg class="i"><use href="#hex"/></svg></button><button aria-label="Перенос метки"><svg class="i"><use href="#tagarr"/></svg></button><button aria-label="Проекция"><svg class="i"><use href="#hex"/></svg></button>
    </div>
    <div class="bar"><i class="grip"></i>
      <button aria-label="Линия"><svg class="i"><use href="#pena"/></svg></button><button aria-label="Кривая"><svg class="i"><use href="#penb"/></svg></button><button aria-label="Цепь"><svg class="i"><use href="#chain"/></svg></button><button aria-label="Замена точки"><svg class="i"><use href="#chainb"/></svg></button><i class="sep"></i>
      <button aria-label="Линейка"><svg class="i"><use href="#ruler"/></svg></button><button aria-label="Высота"><svg class="i"><use href="#rulv"/></svg></button><button aria-label="Стереть"><svg class="i"><use href="#erase"/></svg></button><i class="sep"></i>
      <button aria-label="Переместить"><svg class="i"><use href="#move"/></svg></button>
    </div>
    <div class="bar"><i class="grip"></i>
      <button aria-label="Контур"><svg class="i"><use href="#ring"/></svg></button><button aria-label="Оси 3"><svg class="i"><use href="#ax3"/></svg></button><button aria-label="Область"><svg class="i"><use href="#selsq"/></svg></button><button aria-label="Вернуть оси"><svg class="i"><use href="#axb"/></svg></button><button aria-label="Удалить расчет"><svg class="i"><use href="#calcx"/></svg></button><i class="sep"></i>
      <button aria-label="Правка"><svg class="i"><use href="#boxpen"/></svg></button><button aria-label="Добавить контур"><svg class="i"><use href="#envp"/></svg></button><button aria-label="Удалить контур"><svg class="i"><use href="#envx"/></svg></button><button aria-label="Палитра"><svg class="i"><use href="#rain"/></svg></button><i class="sep"></i>
      <button aria-label="Рамка"><svg class="i"><use href="#frame"/></svg></button><button aria-label="Лист"><svg class="i"><use href="#sqsq"/></svg></button><button aria-label="Фигуры"><svg class="i"><use href="#shapes"/></svg></button><button aria-label="Отправить"><svg class="i"><use href="#docmail"/></svg></button>
    </div>
  </div>
</div>

<main class="work">
  <aside class="palette"><i class="grip-h"></i><span>Диспетчер свойств слоев</span></aside>
  <section class="viewport">
    <svg class="drawing" viewBox="24 235 1546 594" preserveAspectRatio="xMinYMin slice">
      <g class="ln gray">
        <path d="M495 508L710 536L928 562L1144 589L1360 617L1570 641M440 614L658 641L874 667L1088 694L1200 708L1440 738L1570 753M385 720L602 747L817 773L1046 802M495 508L440 614L385 720L342 802M710 536L658 641L602 747L573 802M928 562L874 667L817 773L803 802M1144 589L1034 802M1360 617L1265 802M1570 659L1523 749L1480 829"/>
        <path d="M1411 647Q1399 678 1411 698Q1416 711 1440 737Q1465 760 1500 787L1553 829"/>
      </g>
      <g class="ln orange">
        <path d="M338 352C450 325 580 298 714 298C800 299 870 305 943 312"/>
        <path d="M163 562L332 547L490 537L653 531L740 529L800 529L865 531L963 533"/>
        <path d="M860 418L985 438L1040 444L1117 447L1160 446L1204 443L1255 435L1332 424L1400 411L1452 396L1570 363"/>
        <path d="M884 631L931 648L990 665L1050 682L1090 694L1130 702L1173 707L1240 713L1280 715L1310 714L1370 709L1414 704L1460 698L1513 689L1570 675"/>
      </g>
      <g class="ln blue">
        <path d="M347 365C480 336 600 314 725 314C800 314 870 320 934 324"/>
        <path d="M179 584L306 571L408 563L562 556L704 552L767 551L953 551"/>
        <path d="M853 427L926 442L1040 458L1112 461L1184 459L1276 448L1330 441L1400 428L1478 409L1570 388"/>
        <path d="M880 640L931 658L1010 684L1040 693L1087 704L1130 712L1173 719L1227 723L1300 723L1366 717L1420 711L1500 698L1570 682"/>
      </g>
      <g class="ln red"><path d="M963 283L943 312L933 323L901 365L869 405L860 418L853 425L836 447L800 488L766 528M964 530L955 550L937 571L905 608L884 631L873 646L841 683L800 721L766 755"/></g>
      <path class="tick" d="M637 301h0M703 298h0M400 354h0M926 442h0M986 438h0M1318 426h0M1385 430h0M1453 396h0M1517 400h0M1564 364h0M330 548h0M562 556h0M190 583h0M931 648h0M896 646h0M1040 693h0M1090 694h0M1369 710h0M1420 711h0M1560 677h0"/>
      <g class="pt"><path d="M963 283h0M943 312h0M933 323h0M901 365h0M869 405h0M860 418h0M853 426h0M836 447h0M800 488h0M766 528h0M963 531h0M954 550h0M937 571h0M905 608h0M884 631h0M873 646h0M841 683h0M800 721h0M767 755h0"/></g>
      <g class="lbl red-t">
        <text x="955" y="283">−20</text><text x="941" y="311">91</text><text x="932" y="324">91</text><text x="893" y="364">−60</text><text x="861" y="405">−80</text><text x="858" y="418">91</text><text x="849" y="428">91</text><text x="825" y="446">−100</text><text x="789" y="487">−120</text><text x="753" y="529">−140</text>
        <text x="962" y="532">91</text><text x="953" y="551">91</text><text x="930" y="570">−40</text><text x="898" y="607">−60</text><text x="882" y="631">91</text><text x="865" y="644">−80</text><text x="830" y="683">−100</text><text x="789" y="720">−120</text><text x="766" y="756">91</text>
      </g>
      <g class="lbl gray-t">
        <text x="628" y="301">−20</text><text x="695" y="297">−20</text><text x="392" y="353">−40</text><text x="926" y="323">−40</text>
        <text x="914" y="441">−100</text><text x="976" y="438">−100</text><text x="1310" y="426">−100</text><text x="1375" y="431">−100</text><text x="1446" y="395">−80</text><text x="1510" y="400">−80</text><text x="1557" y="362">−60</text>
        <text x="323" y="547">−40</text><text x="553" y="555">−40</text><text x="184" y="581">−60</text><text x="956" y="532">−20</text><text x="923" y="647">−80</text><text x="887" y="645">−80</text>
        <text x="1034" y="692">−100</text><text x="1083" y="695">−100</text><text x="1361" y="709">−100</text><text x="1411" y="711">−100</text><text x="1553" y="676">−80</text>
      </g>
      <g class="lbl orange-t">
        <text transform="translate(338 352) rotate(5)">Пласт V</text><text transform="translate(163 564) rotate(5)">Пласт V</text><text transform="translate(861 419) rotate(5)">Пласт V</text><text transform="translate(884 634) rotate(5)">Пласт V</text>
      </g>
      <g class="lbl blue-t">
        <text transform="translate(346 366) rotate(5)">Пласт V</text><text transform="translate(177 584) rotate(5)">Пласт V</text><text transform="translate(852 430) rotate(5)">Пласт V</text><text transform="translate(879 643) rotate(5)">Пласт V</text>
      </g>
      <text class="map-title" transform="translate(496 507) rotate(7)">Структурная карта по пласту Пласт V</text>
      <g class="ucs">
        <path stroke="#3f8340" stroke-width="6" d="M70 784L79 763" stroke-linecap="round"/>
        <path stroke="#e27377" stroke-width="5" d="M68 787L116 793"/>
        <path stroke="#3f67ad" stroke-width="6" d="M67 743v45"/><circle cx="67" cy="743" r="2.500" fill="#8dbcf5"/>
        <text x="64" y="740" fill="#1d6bf0">Z</text><text x="77" y="760" fill="#17a51c">Y</text><text x="113" y="790" fill="#e2201f">X</text>
      </g>
      <svg x="963" y="591" width="26" height="28" viewBox="-1 -1 26 26"><use href="#hand" width="24" height="24" fill="#000" stroke="#fff" stroke-width="1.500"/></svg>
    </svg>

    <div class="vp-ctl">
      <button aria-label="Свернуть вид"><svg viewBox="0 0 12 12"><path fill="#ddd" d="M0 8h12v4H0z"/></svg></button>
      <button aria-label="Развернуть вид"><svg viewBox="0 0 12 12"><path fill="none" stroke="#ddd" stroke-width="1.800" d="M4 3V1h7v7H9"/><path fill="none" stroke="#ddd" stroke-width="2.200" d="M1.200 4.200h6.500v6.500H1.200z"/></svg></button>
      <button aria-label="Закрыть вид"><svg viewBox="0 0 12 12"><path stroke="#ddd" stroke-width="2.800" d="M2 1.500l8 9M10 1.500l-8 9"/></svg></button>
    </div>

    <div class="viewcube">
      <svg viewBox="0 0 110 90">
        <ellipse cx="54" cy="53" rx="48" ry="26" fill="none" stroke="#303030" stroke-width="10"/>
        <path fill="#c3c3c3" d="M40 3l38 5-7 17L30 20z"/><path fill="#a8a8a8" d="M30 20l41 5-1 36-40-6z"/><path fill="#868686" d="M71 25l7-17-2 35-6 18z"/>
        <path fill="#b3b9c7" d="M37 18l26 3v8l-26-3z"/><path fill="none" stroke="#333" stroke-width=".8" stroke-dasharray="8 3" d="M30 20l41 5 7-17M71 25l-1 36"/>
        <text x="38" y="14" class="c-top" transform="rotate(5 38 14)">Сверху</text><text x="32" y="41" class="c-front" transform="rotate(5 32 41)">Спереди</text>
        <text x="4" y="48" class="c-dir">З</text><text x="31" y="87" class="c-dir">Ю</text><text x="99" y="62" class="c-dir">В</text>
      </svg>
      <button class="ucs-btn">МСК <svg class="caret"><use href="#dn"/></svg></button>
    </div>

    <div class="navbar">
      <svg viewBox="0 0 34 217" fill="none" stroke="#282828" stroke-width="1.400">
        <circle cx="28" cy="5" r="3.500" stroke-width="1"/><path d="M26 3l4 4M30 3l-4 4" stroke-width="1"/>
        <circle cx="17" cy="29" r="11"/><circle cx="17" cy="29" r="6"/><path d="M17 18h11v11"/><path fill="#282828" stroke="none" d="M14 49h6l-3 4z"/>
        <path d="M3 57h28" stroke="#5a5a5a" stroke-width="1"/>
        <use href="#hand" x="5" y="61" width="24" height="24"/>
        <path d="M5 92l14 14M20 91L5 107M5 97v-5h5M15 91h5v5M5 102v5h5"/><circle cx="22" cy="106" r="5"/><path d="M26 110l5 5" stroke-width="2.500"/>
        <path fill="#282828" stroke="none" d="M14 122h6l-3 4zM14 161h6l-3 4z"/>
        <path d="M14 153v-14h-2l4.500-8 4.500 8h-2v14zM25 139c5 2 4 7-2 8-5 1-10 1-14-1M12 143l-5 3 4 5"/>
        <path d="M3 169h28" stroke="#5a5a5a" stroke-width="1"/><path d="M5 173h6v6H5zM14 173h6v6h-6zM23 173h6v6h-6zM5 183h16v13H5z" stroke-width="1.300"/><path fill="#282828" d="M10 186l7 4-7 4z"/>
        <circle cx="28" cy="211" r="3.500"/><path d="M25 211h6"/>
      </svg>
    </div>

    <div class="console">
      <p class="hint">Нажмите ESC или ENTER для выхода, либо щелкните правой кнопкой мыши для вызова контекстного меню.</p>
      <div class="cmdline">
        <div class="cmd-tools"><i class="grip"></i><button aria-label="Закрыть"><svg viewBox="0 0 10 10"><path stroke="#e8e8e8" stroke-width="2" d="M1 1l8 8M9 1L1 9"/></svg></button><button aria-label="Настройка"><svg class="i"><use href="#wrench"/></svg></button></div>
        <svg class="spark" viewBox="0 0 5 5"><path stroke="#74b9e8" d="M2.500 0v5M0 2.500h5"/></svg><svg class="caret ink"><use href="#dn"/></svg>
        <input type="text" aria-label="Команда" value="3DОРБИТА">
        <svg class="caret ink up"><use href="#dn"/></svg>
      </div>
    </div>
  </section>

  <aside class="sidebar">
    <i class="grip-h"></i>
    <button aria-label="Дуга"><svg class="i"><use href="#v1"/></svg></button><button aria-label="Угол"><svg class="i"><use href="#v2"/></svg></button><button aria-label="Хорда"><svg class="i"><use href="#v3"/></svg></button><button aria-label="Отклонение"><svg class="i"><use href="#v4"/></svg></button><button aria-label="План"><svg class="i"><use href="#v5"/></svg></button><button aria-label="Координаты"><svg class="i"><use href="#v6"/></svg></button><button aria-label="Широта"><svg class="i"><use href="#v7"/></svg></button><button aria-label="Номер точки"><svg class="i"><use href="#v8"/></svg></button><button aria-label="Имя точки"><svg class="i"><use href="#v9"/></svg></button><button aria-label="Объект точки"><svg class="i"><use href="#v10"/></svg></button><button aria-label="Поиск точки"><svg class="i"><use href="#v11"/></svg></button><button aria-label="Смещение"><svg class="i"><use href="#v12"/></svg></button><button aria-label="Пикет"><svg class="i"><use href="#v13"/></svg></button>
    <i class="rule"></i>
    <button aria-label="Фильтр точек"><svg class="i"><use href="#v14"/></svg></button>
    <i class="rule"></i>
    <button aria-label="Привязка"><svg class="i"><use href="#v15"/></svg></button><button aria-label="По поверхности"><svg class="i"><use href="#v16"/></svg></button><button aria-label="По точке"><svg class="i"><use href="#v17"/></svg></button>
    <i class="rule"></i>
    <button aria-label="Профиль 1"><svg class="i"><use href="#v18"/></svg></button><button aria-label="Профиль 2"><svg class="i"><use href="#v19"/></svg></button><button aria-label="Профиль 3"><svg class="i"><use href="#v20"/></svg></button><button aria-label="Профиль 4"><svg class="i"><use href="#v21"/></svg></button><button aria-label="Окружность"><svg class="i"><use href="#v22"/></svg></button><button aria-label="Длина"><svg class="i"><use href="#v23"/></svg></button><button aria-label="Калькулятор"><svg class="i"><use href="#v24"/></svg></button>
    <i class="grip-h end"></i>
  </aside>
</main>

<footer class="status">
  <nav class="layouts"><button class="active">Модель</button><button>Layout1</button><button>Layout2</button><button class="plus" aria-label="Новый лист"><svg><use href="#plus"/></svg></button></nav>
  <div class="modes">
    <div class="grp"><button class="txt">МОДЕЛЬ</button></div>
    <div class="grp"><button aria-label="Сетка"><svg class="i"><use href="#s1"/></svg></button><button aria-label="Шаг"><svg class="i"><use href="#s2"/></svg></button><svg class="caret"><use href="#dn"/></svg></div>
    <div class="grp"><button aria-label="Ввод"><svg class="i"><use href="#s3"/></svg></button><button aria-label="Орто"><svg class="i"><use href="#s4"/></svg></button><button class="on" aria-label="Полярное"><svg class="i"><use href="#s5"/></svg></button><svg class="caret"><use href="#dn"/></svg><button aria-label="Изо"><svg class="i"><use href="#s6"/></svg></button><svg class="caret"><use href="#dn"/></svg></div>
    <div class="grp"><button class="on" aria-label="Слежение"><svg class="i"><use href="#s7"/></svg></button><button class="on" aria-label="Привязка"><svg class="i"><use href="#s8"/></svg></button><svg class="caret"><use href="#dn"/></svg></div>
    <div class="grp"><button class="on" aria-label="Динамическая ПСК"><svg class="i"><use href="#s9"/></svg></button></div>
    <div class="grp ann"><button class="on" aria-label="Аннотации"><svg class="i"><use href="#anna"/></svg></button><button aria-label="Автомасштаб"><svg class="i"><use href="#annb"/></svg></button><button aria-label="Масштаб"><svg class="i"><use href="#ann"/></svg></button><button class="txt scale">1:1000</button><svg class="caret"><use href="#dn"/></svg></div>
    <div class="grp"><button aria-label="Рабочее пространство"><svg class="i"><use href="#gear"/></svg></button><svg class="caret"><use href="#dn"/></svg></div>
    <div class="grp"><button aria-label="Монитор"><svg class="i"><use href="#plus"/></svg></button></div>
    <div class="grp"><button aria-label="Изоляция"><svg class="i"><use href="#s10"/></svg></button></div>
    <div class="grp"><button aria-label="Уровень"><svg class="i"><use href="#s11"/></svg></button><button class="txt lvl">3.500</button></div>
    <div class="grp"><button aria-label="Графика"><svg class="i l"><use href="#s12"/></svg></button></div>
    <div class="grp"><button aria-label="Полный экран"><svg class="i"><use href="#s13"/></svg></button><button aria-label="Адаптация"><svg class="i"><use href="#s14"/></svg></button></div>
  </div>
</footer>
</div>
</body>
</html>
```

FILE: styles.css
```css
:root {
  --dark: #222933;
  --panel: #3b4453;
  --bar: #465063;
  --edge: #29303b;
  --text: #e2e4e8;
  --muted: #b4b8bf;
  --on: #5b8ec6;
}
* { box-sizing: border-box; }
html, body { height: 100%; margin: 0; }
body { font: 12px/16px "Noto Sans", "Open Sans", sans-serif; color: var(--text); background: var(--dark); overflow: hidden; }
button, input { font: inherit; color: inherit; background: none; border: 0; padding: 0; margin: 0; }
button { display: flex; align-items: center; justify-content: center; white-space: nowrap; }
svg { display: block; flex: none; }
.defs { position: absolute; width: 0; height: 0; }
.i { width: 18px; height: 18px; }
.i.l { width: 22px; height: 22px; }
.flip { transform: scaleX(-1); }
.caret { width: 8px; height: 5px; }
.caret.small { width: 6px; height: 4px; }
.app { display: flex; flex-direction: column; height: 100vh; }

/* title bar */
.titlebar { position: relative; display: flex; align-items: center; height: 24px; background: var(--bar); padding-left: 49px; flex: none; }
.logo { position: absolute; left: 0; top: 0; z-index: 2; width: 41px; height: 41px; flex-direction: column; background: linear-gradient(#a9abae, #75787c); border: 1px solid #55585d; font: bold 8px/8px "DejaVu Sans", sans-serif; color: #15181c; }
.logo-mark { width: 34px; height: 28px; }
.logo-caret { position: absolute; right: 1px; top: 18px; filter: brightness(.3); width: 6px; height: 4px; }
.quick { display: flex; align-items: center; gap: 7px; width: 223px; }
.quick .caret { width: 6px; height: 4px; margin: 0 1px; }
.quick .off { opacity: .4; }
.workspace { width: 188px; height: 22px; border: 1px solid #343c4a; border-top: 0; padding: 0 3px; gap: 2px; background: #434c5d; justify-content: flex-start; }
.workspace span { flex: 1; text-align: left; }
.more { width: 9px; height: 9px; margin-left: 4px; }
.doc-title { flex: 1; display: flex; justify-content: center; gap: 13px; color: #a0a5ae; white-space: nowrap; }
.play { width: 5px; height: 8px; margin-right: 7px; }
.search { width: 188px; height: 22px; border: 1px solid #343c4a; border-top: 0; padding: 0 2px; font-style: italic; font-size: 11px; }
.search::placeholder { color: #b9bdc5; }
.services { display: flex; align-items: center; gap: 7px; width: 303px; padding-left: 2px; }
.login { gap: 5px; }
.help { border-left: 1px solid #5a6375; height: 18px; padding-left: 8px; }
.help b { width: 16px; height: 16px; border-radius: 50%; background: #eef2f8; color: #2e62b5; line-height: 16px; text-align: center; }
.winctl { display: flex; gap: 13px; padding: 0 5px 0 28px; }
.winctl svg { width: 12px; height: 12px; }

/* menu */
.menu { display: flex; align-items: flex-end; height: 22px; padding-left: 46px; flex: none; color: #c0c3c9; }
.menu-tabs { display: flex; justify-content: space-between; width: 1470px; height: 20px; }
.menu-tabs button { padding: 0 9px; }
.menu-tabs .active { background: var(--panel); color: #f0f1f3; }
.menu-min { margin: 0 7px 7px 24px; }
.menu-min svg { width: 14px; height: 8px; }
.menu > .caret { margin-bottom: 9px; }

/* ribbon */
.ribbon { display: flex; height: 101px; background: var(--panel); flex: none; }
.panel { display: flex; flex-direction: column; border-right: 1px solid var(--edge); }
.p1 { width: 237px; }
.p2 { width: 842px; }
.p3 { width: 363px; }
.cmds { display: flex; align-items: flex-start; justify-content: space-between; flex: 1; padding: 5px 5px 0; }
.p2 .cmds { padding-right: 2px; }
.cmd { display: block; text-align: center; line-height: 17px; color: #eceef1; }
.big { width: 34px; height: 34px; margin: 0 auto 4px; }
.panel h2 { margin: 0; font: inherit; text-align: center; height: 17px; }
.stack { display: flex; flex-direction: column; gap: 9px; padding-right: 4px; }
.matrix { display: grid; grid-template-columns: repeat(4, 25px); gap: 9px 0; }
.collapsed { width: 62px; margin-left: 1px; background: #4f5b6e; border: 1px solid var(--edge); flex-direction: column; justify-content: space-between; padding: 8px 0 4px; }

/* document tabs */
.doctabs { display: flex; align-items: flex-end; height: 28px; padding-left: 16px; flex: none; }
.doctab { height: 24px; width: 134px; padding: 1px 0 0 17px; justify-content: flex-start; border-radius: 12px 12px 0 0; background: #2b323e; color: #b9bdc5; }
.doctab.active { width: 132px; padding: 1px 17px 0 11px; justify-content: space-between; background: var(--panel); color: #f0f1f3; border-radius: 12px 14px 0 0; }
.doctab svg { width: 10px; height: 10px; }
.addtab { width: 22px; height: 16px; margin: 0 0 3px 4px; background: #303846; border-radius: 3px 10px 3px 10px; color: #9a9fa9; }
.addtab svg { width: 10px; height: 10px; }

/* toolbars */
.toolbars { display: flex; flex-direction: column; gap: 2px; padding: 3px 0; background: var(--panel); flex: none; }
.row { display: flex; }
.bar { display: flex; align-items: center; height: 26px; border: 1px solid var(--edge); border-left: 0; padding-right: 3px; }
.wide .bar { padding-right: 0; }
.bar button { width: 24px; height: 24px; }
.grip { width: 8px; height: 16px; flex: none; background: radial-gradient(circle at 1px 1px, #aeb3bc 1px, transparent 1px) 2px 0 / 3px 3px; background-clip: content-box; padding-left: 2px; }
.bar .sep { width: 5px; height: 20px; border-right: 2px solid #8a909b; }
.wide .bar .sep { width: 6px; }

/* work area */
.work { display: flex; flex: 1; min-height: 0; background: var(--panel); }
.palette { width: 24px; display: flex; flex-direction: column; align-items: center; padding: 6px 0 14px; border: 1px solid var(--edge); border-left: 0; background: #414b5b; }
.palette span { writing-mode: vertical-rl; transform: rotate(180deg); margin: auto; }
.grip-h { width: 14px; height: 5px; flex: none; background: radial-gradient(circle at 1px 1px, #aeb3bc 1px, transparent 1px) 0 0 / 3px 3px; }
.palette .grip-h { width: 8px; }
.viewport { position: relative; flex: 1; min-width: 0; background: #000; overflow: hidden; }
.drawing { width: 100%; height: 100%; }
.ln { fill: none; stroke-width: 1; }
.gray { stroke: #7d7d7d; }
.orange { stroke: #cc6a05; }
.blue { stroke: #0a62cc; }
.red { stroke: #f00; }
.pt { stroke: #f00; stroke-width: 4; stroke-linecap: round; }
.tick { stroke: #8c8c8c; stroke-width: 3; stroke-linecap: round; }
.lbl { font: italic 9px "DejaVu Sans", sans-serif; }
.gray-t { fill: #8c8c8c; }
.red-t { fill: #f00; }
.orange-t { fill: #cc6a05; }
.blue-t { fill: #0a62cc; }
.map-title { font: italic 10px "DejaVu Sans", sans-serif; fill: #e8e8e8; }
.ucs { fill: none; font: 18px "Open Sans", sans-serif; font-weight: 300; }
.vp-ctl { position: absolute; top: 7px; right: 10px; display: flex; gap: 9px; }
.vp-ctl svg { width: 12px; height: 12px; }
.viewcube { position: absolute; top: 61px; right: 15px; width: 110px; display: flex; flex-direction: column; align-items: center; gap: 15px; }
.viewcube > svg { width: 110px; height: 90px; font-family: "Noto Sans", sans-serif; overflow: visible; }
.c-top { font-size: 9px; font-style: italic; fill: #222; }
.c-front { font-size: 9px; fill: #222; }
.c-dir { font-size: 14px; fill: #b5b5b5; }
.ucs-btn { width: 46px; height: 18px; gap: 4px; border-radius: 5px; background: #8d8e99; border: 1px solid #a8a9b3; color: #4a4c55; }
.ucs-btn .caret { opacity: .6; }
.navbar { position: absolute; top: 208px; right: 3px; background: #414141e6; border-radius: 4px; }
.navbar svg { width: 34px; height: 217px; }
.console { position: absolute; left: 140px; right: 139px; bottom: 0; display: flex; flex-direction: column; align-items: flex-end; gap: 4px; }
.hint { margin: 0 6px 0 0; padding: 0 15px; border-radius: 3px; background: #4b4b4bee; font: 12px/17px "DejaVu Sans Mono", monospace; color: #ddd; white-space: nowrap; }
.cmdline { display: flex; align-items: center; align-self: stretch; height: 27px; background: #fff; border-radius: 3px; overflow: hidden; padding-right: 6px; color: #111; }
.cmd-tools { display: flex; align-items: center; gap: 7px; width: 58px; height: 27px; padding-left: 2px; background: #2c333f; }
.cmd-tools svg { width: 16px; height: 18px; }
.cmd-tools button:nth-child(2) svg { width: 10px; height: 10px; }
.cmd-tools .grip { width: 7px; height: 18px; }
.spark { width: 5px; height: 5px; margin: 0 8px 0 9px; }
.ink { filter: brightness(.4); }
.up { transform: rotate(180deg); }
.cmdline input { flex: 1; padding-left: 7px; font: bold 11px/16px "DejaVu Sans Mono", monospace; }
.sidebar { width: 27px; margin-left: 3px; display: flex; flex-direction: column; align-items: center; justify-content: space-between; border: 1px solid var(--edge); padding: 2px 3px 2px 0; }
.rule { width: 20px; height: 2px; background: #dcdcdc; }
.sidebar .end { height: 6px; }

/* status bar */
.status { display: flex; justify-content: space-between; height: 25px; background: var(--dark); flex: none; }
.layouts { display: flex; align-items: flex-start; padding-left: 13px; color: var(--muted); }
.layouts button { height: 19px; width: 67px; margin-right: 1px; background: #2b323e; border-radius: 0 0 9px 9px; }
.layouts .active { width: 70px; background: var(--panel); color: #fff; font-weight: bold; }
.layouts .plus { width: 24px; margin-left: 4px; color: #9a9fa9; }
.layouts .plus svg { width: 9px; height: 9px; }
.modes { display: flex; gap: 3px; padding-top: 1px; }
.grp { display: flex; align-items: center; background: var(--panel); }
.grp button { width: 25px; height: 24px; }
.grp .on { background: var(--on); width: 23px; margin-right: 2px; color: #fff; }
.grp .on:last-child { margin-right: 0; }
.grp .txt { width: auto; padding: 0 4px; color: #eee; }
.grp .caret { margin: 0 4px 0 2px; }
.grp .scale { padding: 0 2px 0 6px; }
.grp .lvl { padding: 0 9px 0 6px; }
```
